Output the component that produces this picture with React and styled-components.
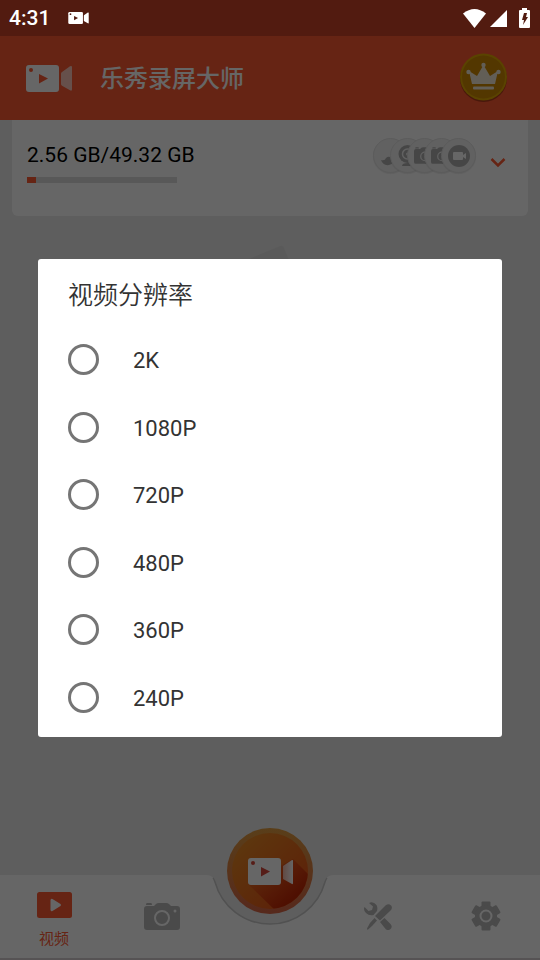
import styled, { createGlobalStyle } from "styled-components";

const GlobalStyle = createGlobalStyle`
  * {
    box-sizing: border-box;
  }
  body {
    margin: 0;
    font-family: Roboto, "Noto Sans CJK SC", sans-serif;
    background: #ebebeb;
  }
  button {
    padding: 0;
    border: 0;
    background: none;
    font: inherit;
    color: inherit;
    cursor: pointer;
  }
  svg {
    display: block;
  }
`;

const StyledApp = styled.div`
  position: relative;
  display: flex;
  flex-direction: column;
  min-height: 100vh;
`;

const StyledStatusBar = styled.div`
  display: flex;
  align-items: center;
  justify-content: space-between;
  height: 36px;
  padding: 0 10px 0 9px;
  background: #521b10;
  color: #fff;
  font-size: 21px;
  font-weight: 500;
`;

const StyledStatusGroup = styled.div`
  display: flex;
  align-items: center;
  gap: ${({ $gap }) => $gap}px;
`;

const StyledScreen = styled.div`
  position: relative;
  display: flex;
  flex: 1;
  flex-direction: column;
`;

const StyledHeader = styled.header`
  display: flex;
  align-items: center;
  height: 84px;
  padding: 0 32px 0 26px;
  background: #ff5a32;
  color: #fff;
`;

const StyledTitle = styled.h1`
  flex: 1;
  margin: 0 0 0 28px;
  padding-top: 2px;
  font-size: 24px;
  font-weight: 500;
  line-height: 32px;
`;

const StyledStorage = styled.section`
  display: flex;
  justify-content: space-between;
  height: 96px;
  margin: 0 12px;
  padding: 18px 22px 0 15px;
  border-radius: 0 0 6px 6px;
  background: #fff;
`;

const StyledStorageText = styled.div`
  margin-top: 4px;
  font-size: 21px;
  line-height: 26px;
  color: #000;
`;

const StyledBar = styled.div`
  width: 150px;
  height: 6px;
  margin-top: 9px;
  background: #dcdcdc;
`;

const StyledBarFill = styled.div`
  height: 100%;
  background: #ff5a32;
`;

const StyledShortcuts = styled.div`
  display: flex;
  align-items: flex-start;
`;

const StyledBadges = styled.div`
  display: flex;
  color: #b0b0b0;
`;

const StyledBadge = styled.span`
  display: flex;
  align-items: center;
  justify-content: center;
  width: 35px;
  height: 35px;
  border: 1px solid #e4e4e4;
  border-radius: 50%;
  background: #f3f3f3;
  box-shadow: 0 1px 1px rgba(0, 0, 0, 0.08);
  & + & {
    margin-left: -18px;
  }
`;

const StyledExpand = styled.button`
  margin: 19px 0 0 14px;
`;

const StyledMain = styled.main`
  display: flex;
  flex: 1;
  justify-content: center;
  padding-top: 28px;
`;

const StyledNav = styled.nav`
  position: relative;
  display: grid;
  grid-template-columns: repeat(5, 1fr);
  height: 85px;
`;

const StyledNavShape = styled.div`
  position: absolute;
  inset: 0;
  display: flex;
  border-bottom: 2px solid #d8cfd2;
`;

const StyledNavSide = styled.div`
  flex: 1;
  background: #fff;
`;

const StyledNavItem = styled.button`
  position: relative;
  display: flex;
  flex-direction: column;
  align-items: center;
  justify-content: center;
  gap: 10px;
  padding-bottom: ${({ $active }) => ($active ? 0 : 3)}px;
  padding-top: ${({ $active }) => ($active ? 6 : 0)}px;
  font-size: 15px;
  line-height: 22px;
  color: ${({ $active }) => ($active ? "#ff5a32" : "#b8b8b8")};
`;

const StyledRecord = styled.button`
  position: absolute;
  top: -47px;
  left: 50%;
  display: flex;
  align-items: center;
  justify-content: center;
  width: 86px;
  height: 86px;
  transform: translateX(-50%);
`;

const StyledOverlay = styled.div`
  position: absolute;
  inset: 0;
  display: flex;
  align-items: center;
  justify-content: center;
  padding: 0 38px;
  background: rgba(0, 0, 0, 0.6);
`;

const StyledDialog = styled.form`
  width: 100%;
  padding-bottom: 6px;
  border-radius: 3px;
  background: #fff;
  color: #333;
`;

const StyledDialogTitle = styled.h2`
  margin: 0;
  padding: 19px 30px 12px;
  font-size: 25px;
  font-weight: 350;
  line-height: 36px;
`;

const StyledOptions = styled.div`
  display: grid;
  grid-auto-rows: 1fr;
  height: 405px;
`;

const StyledOption = styled.label`
  display: flex;
  align-items: center;
  gap: 34px;
  padding: 0 30px;
  font-size: 22px;
  line-height: 28px;
  cursor: pointer;
`;

const StyledOptionText = styled.span`
  padding-top: 3px;
`;

const StyledRadio = styled.input`
  appearance: none;
  width: 31px;
  height: 31px;
  margin: 0;
  border: 3px solid #757575;
  border-radius: 50%;
  &:checked {
    border-color: #ff5a32;
    background: radial-gradient(#ff5a32 45%, transparent 50%);
  }
`;

const Camcorder = ({ width = 46, height = 27, hole, lens = "#fff" }) => (
  <svg width={width} height={height} viewBox="0 0 46 27" aria-hidden="true">
    <rect width="33" height="27" rx="3" fill="#fff" />
    <circle cx="5" cy="5" r="2" fill={hole} />
    <path d="M13 9l9 4.500-9 5z" fill={hole} />
    <path
      d="M35 8.500q0-1 1-1.600l8-5.600q2-1 2 1v22q0 2-2 1l-8-4.600q-1-.7-1-1.700z"
      fill={lens}
    />
  </svg>
);

const StatusIcons = () => (
  <>
    <svg width="23" height="19" viewBox="0 0 23 19" aria-hidden="true">
      <path d="M0 4.500Q11.500-4.500 23 4.500L11.500 19z" fill="#fff" />
    </svg>
    <svg width="17" height="17" viewBox="0 0 17 17" aria-hidden="true">
      <path d="M17 0v17H0z" fill="#fff" />
    </svg>
  </>
);

const Battery = () => (
  <svg width="11" height="20" viewBox="0 0 11 20" aria-hidden="true">
    <path d="M3 0h5v2h2q1 0 1 1v16q0 1-1 1H1q-1 0-1-1V3q0-1 1-1h2z" fill="#fff" />
    <path d="M5 5h3l-1 4h2l-5 8 1-5H3z" fill="#521b10" />
  </svg>
);

const Crown = () => (
  <svg width="49" height="50" viewBox="0 0 49 50" aria-hidden="true">
    <circle cx="24.500" cy="25.500" r="23.500" fill="#b33c1c" />
    <circle cx="24.500" cy="24" r="23.500" fill="#e0a800" />
    <circle cx="24.500" cy="24" r="21.500" fill="#d08a00" />
    <g fill="#f4ead8">
      <path d="M10 18l8 5 6.500-11L31 23l8-5-3 13H13z" />
      <circle cx="9.500" cy="19" r="2.200" />
      <circle cx="24.500" cy="12" r="2.200" />
      <circle cx="39.500" cy="19" r="2.200" />
      <rect x="14" y="33.500" width="21" height="3" rx="1" />
    </g>
  </svg>
);

const PhotoCamera = ({ width = 36, height = 27, hole = "#fff" }) => (
  <svg width={width} height={height} viewBox="0 0 36 27" aria-hidden="true">
    <path
      d="M3 0h4q1 0 1 2H2q0-2 1-2zM3 3h7l2-2q1-1 3-1h7q2 0 3 1l2 2h6q3 0 3 3v18q0 3-3 3H3q-3 0-3-3V6q0-3 3-3z"
      fill="currentColor"
    />
    <circle cx="18" cy="15" r="7" fill="none" stroke={hole} strokeWidth="2" />
    <circle cx="31" cy="8" r="1.500" fill={hole} />
  </svg>
);

const Brush = () => (
  <svg width="21" height="21" viewBox="0 0 21 21" aria-hidden="true">
    <path
      d="M1 15q4 1 5-2 2-2 4-1l7-10q2-1 2 1l-6 11q1 5-4 6-6 1-8-5z"
      fill="currentColor"
    />
  </svg>
);

const Webcam = () => (
  <svg width="21" height="21" viewBox="0 0 21 21" aria-hidden="true">
    <circle cx="10.500" cy="9" r="9" fill="currentColor" />
    <path d="M5 21q0-3 5.500-3t5.500 3z" fill="currentColor" />
    <circle cx="10.500" cy="9" r="5" fill="none" stroke="#f3f3f3" strokeWidth="1.500" />
    <circle cx="10.500" cy="9" r="1.500" fill="#f3f3f3" />
  </svg>
);

const RoundVideo = () => (
  <svg width="22" height="22" viewBox="0 0 22 22" aria-hidden="true">
    <circle cx="11" cy="11" r="11" fill="currentColor" />
    <rect x="5" y="7" width="10" height="8" rx="1" fill="#fff" />
    <path d="M15 10l3-2v6l-3-2z" fill="#fff" />
  </svg>
);

const Play = () => (
  <svg width="35" height="26" viewBox="0 0 35 26" aria-hidden="true">
    <rect width="35" height="26" rx="2.500" fill="currentColor" />
    <path
      d="M13.500 8.500q0-2.500 2-1.500l8 5q1 1 0 2l-8 5q-2 1-2-1.500z"
      fill="#fff"
    />
  </svg>
);

const Tools = () => (
  <svg width="28" height="28" viewBox="0 0 28 28" aria-hidden="true">
    <g fill="currentColor">
      <path d="M5 1Q9-1 12.500 3q1.500 3 .5 6l-3.500 4Q5 14 2 11-1 8 .5 5l4 4 3.500-1 1-3.500z" />
      <path d="M11 14L21.500 3.500q3-2.500 5.500 0 2 2.500-.5 5L16 18.500z" />
      <path d="M10.500 16l2.500 2.500-5 5.500-4.500 4L3 26.500 6 21z" />
      <path d="M16 20l4.500-4 6 6q2 2 .5 4.500-2 2.500-5 1z" />
    </g>
  </svg>
);

const Gear = () => (
  <svg width="30" height="30" viewBox="-15 -15 30 30" aria-hidden="true">
    <g fill="currentColor">
      {[0, 60, 120].map((angle) => (
        <rect
          key={angle}
          x="-4.500"
          y="-14.500"
          width="9"
          height="29"
          rx="1"
          transform={`rotate(${angle})`}
        />
      ))}
      <circle r="11" />
    </g>
    <circle r="5.500" fill="none" stroke="#fff" strokeWidth="2" />
  </svg>
);

const Notch = () => (
  <svg width="132" height="83" viewBox="0 0 132 83" aria-hidden="true">
    <path
      d="M0 0h2C8 0 10 3 11 7a57 57 0 0 0 110 0c1-4 3-7 9-7h2v83H0z"
      fill="#fff"
    />
    <path
      d="M9 3q1 1 2 4a57 57 0 0 0 110 0q1-3 2-4"
      fill="none"
      stroke="#cacaca"
      strokeWidth="1.500"
    />
  </svg>
);

const RecordDisc = () => (
  <svg width="86" height="86" viewBox="0 0 86 86" aria-hidden="true">
    <defs>
      <linearGradient id="disc" x1="0" y1="0" x2="1" y2="1">
        <stop offset="0.100" stopColor="#e88a24" />
        <stop offset="1" stopColor="#e84a14" />
      </linearGradient>
      <linearGradient id="ring" x1="0" y1="0" x2="0" y2="1">
        <stop offset="0" stopColor="#e09c40" />
        <stop offset="1" stopColor="#d86648" />
      </linearGradient>
      <linearGradient id="shade" x1="0" y1="0" x2="1" y2="1">
        <stop offset="0.200" stopColor="#d83c14" stopOpacity="0.200" />
        <stop offset="0.700" stopColor="#c42804" />
      </linearGradient>
      <linearGradient id="lens">
        <stop offset="0" stopColor="#f2b8a8" />
        <stop offset="1" stopColor="#fff" />
      </linearGradient>
      <clipPath id="inner">
        <circle cx="43" cy="43" r="38" />
      </clipPath>
    </defs>
    <circle cx="43" cy="43" r="43" fill="url(#ring)" />
    <circle cx="43" cy="43" r="38" fill="url(#disc)" />
    <path d="M21 56L66 31l20 20v35H52z" fill="url(#shade)" clipPath="url(#inner)" />
    <g transform="translate(21 30)">
      <rect width="33" height="27" rx="3" fill="#fff" />
      <circle cx="5" cy="5" r="2" fill="#d84a3c" />
      <path d="M13 9l9 4.500-9 5z" fill="#d84a3c" />
      <path d="M35 8l9-6q1-.5 1 1v22q0 1.500-1 1l-9-5z" fill="url(#lens)" />
    </g>
  </svg>
);

const EmptyPaper = () => (
  <svg width="140" height="180" viewBox="0 0 140 180" aria-hidden="true">
    <path d="M10 31L80 2q3-1 4 2l54 128q1 3-2 4l-70 30z" fill="#e2e2e2" />
  </svg>
);

const usedShare = 6;
const resolutions = ["2K", "1080P", "720P", "480P", "360P", "240P"];

const Shortcuts = () => (
  <StyledBadges>
    <StyledBadge>
      <Brush />
    </StyledBadge>
    <StyledBadge>
      <Webcam />
    </StyledBadge>
    <StyledBadge>
      <PhotoCamera width={22} height={17} hole="#f3f3f3" />
    </StyledBadge>
    <StyledBadge>
      <PhotoCamera width={22} height={17} hole="#f3f3f3" />
    </StyledBadge>
    <StyledBadge>
      <RoundVideo />
    </StyledBadge>
  </StyledBadges>
);

const App = () => (
  <StyledApp>
    <GlobalStyle />
    <StyledStatusBar>
      <StyledStatusGroup $gap={18}>
        <span>4:31</span>
        <Camcorder width={21} height={12} hole="#521b10" />
      </StyledStatusGroup>
      <StyledStatusGroup $gap={12}>
        <StyledStatusGroup $gap={4}>
          <StatusIcons />
        </StyledStatusGroup>
        <Battery />
      </StyledStatusGroup>
    </StyledStatusBar>
    <StyledScreen>
      <StyledHeader>
        <Camcorder hole="#ff5a32" lens="#ffc9bb" />
        <StyledTitle>乐秀录屏大师</StyledTitle>
        <button type="button" aria-label="VIP">
          <Crown />
        </button>
      </StyledHeader>
      <StyledStorage>
        <div>
          <StyledStorageText>2.56 GB/49.32 GB</StyledStorageText>
          <StyledBar>
            <StyledBarFill style={{ width: `${usedShare}%` }} />
          </StyledBar>
        </div>
        <StyledShortcuts>
          <Shortcuts />
          <StyledExpand type="button" aria-label="展开">
            <svg width="16" height="12" viewBox="0 0 16 12" aria-hidden="true">
              <path d="M1.500 2L8 8.500 14.500 2" fill="none" stroke="#ff5a32" strokeWidth="2.500" />
            </svg>
          </StyledExpand>
        </StyledShortcuts>
      </StyledStorage>
      <StyledMain>
        <EmptyPaper />
      </StyledMain>
      <StyledNav>
        <StyledNavShape>
          <StyledNavSide />
          <Notch />
          <StyledNavSide />
        </StyledNavShape>
        <StyledNavItem type="button" $active>
          <Play />
          视频
        </StyledNavItem>
        <StyledNavItem type="button" aria-label="图片">
          <PhotoCamera />
        </StyledNavItem>
        <span />
        <StyledNavItem type="button" aria-label="工具">
          <Tools />
        </StyledNavItem>
        <StyledNavItem type="button" aria-label="设置">
          <Gear />
        </StyledNavItem>
        <StyledRecord type="button" aria-label="录制">
          <RecordDisc />
        </StyledRecord>
      </StyledNav>
      <StyledOverlay>
        <StyledDialog role="dialog" aria-labelledby="dialog-title">
          <StyledDialogTitle id="dialog-title">视频分辨率</StyledDialogTitle>
          <StyledOptions>
            {resolutions.map((name) => (
              <StyledOption key={name}>
                <StyledRadio type="radio" name="resolution" value={name} />
                <StyledOptionText>{name}</StyledOptionText>
              </StyledOption>
            ))}
          </StyledOptions>
        </StyledDialog>
      </StyledOverlay>
    </StyledScreen>
  </StyledApp>
);

export default App;
